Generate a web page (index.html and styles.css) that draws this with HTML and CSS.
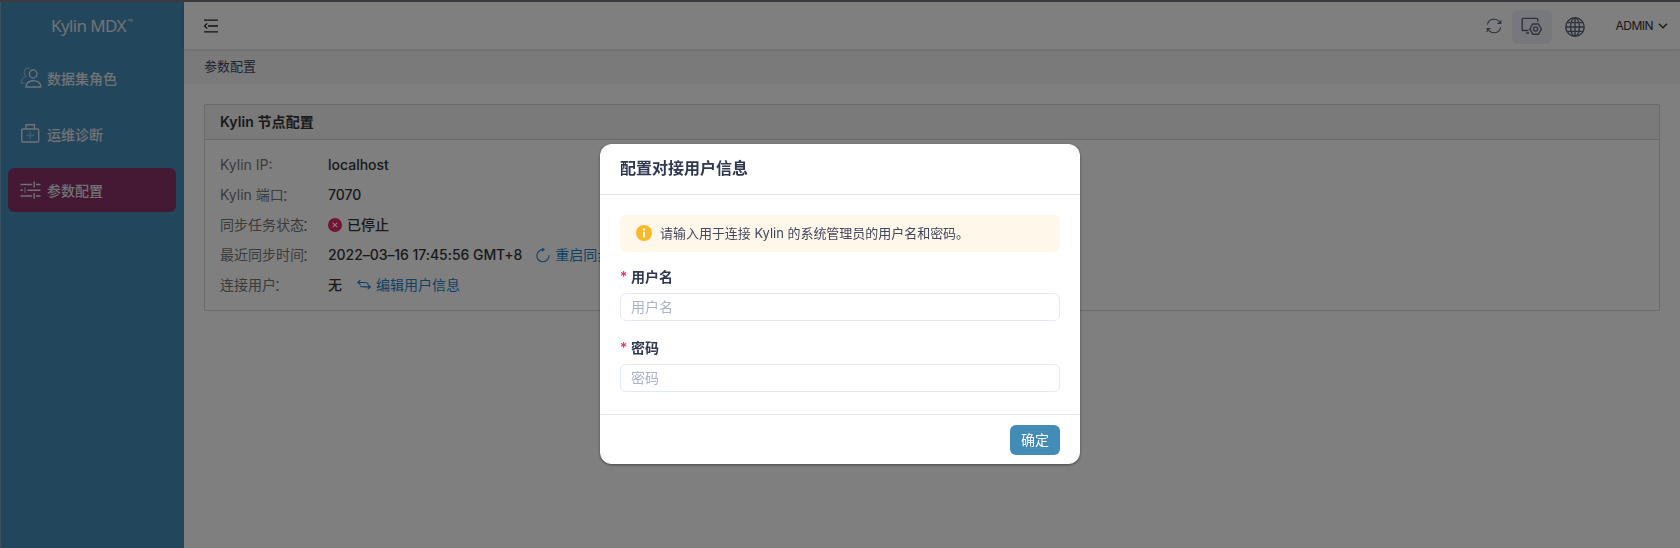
FILE: index.html
```html
<!DOCTYPE html>
<html lang="zh-CN">
<head>
<meta charset="utf-8">
<title>Kylin MDX</title>
<link rel="stylesheet" href="styles.css">
</head>
<body>
<div class="app">
  <aside class="sidebar">
    <div class="logo">Kylin MDX<span class="logo-tm">™</span></div>
    <nav class="menu">
      <a class="menu-item">
        <svg class="menu-icon" width="22" height="22" viewBox="0 0 22 22"><g class="dim"><path d="M10 1.3C7 .2 4.3 2 4.3 4.9c0 1.8.7 3 2 4"/><path d="M6.8 9.6C3.4 9.8 1.3 12.2 1 16h3.6"/></g><ellipse cx="13.2" cy="7" rx="3.8" ry="4.1"/><path d="M6 20c0-3.9 3-6.3 7.4-6.3s7.4 2.4 7.4 6.3z"/></svg>
        <span>数据集角色</span>
      </a>
      <a class="menu-item">
        <svg class="menu-icon" width="22" height="22" viewBox="0 0 22 22"><rect x="1.7" y="6" width="17" height="13" rx="1"/><path d="M6 6V1.8h8.4V6"/><path class="dim" d="M10.2 8.4v8.2M6.1 12.5h8.2"/></svg>
        <span>运维诊断</span>
      </a>
      <a class="menu-item active">
        <svg class="menu-icon" width="22" height="22" viewBox="0 0 22 22"><path d="M.5 5.5h11.7M14.2 2.6v5.8M16 5.5h4.5M.5 11.2h2.3M7.5 11.2h13M.5 17h11.7M14.2 14v5.8M16 17h4.5"/><path class="dim" d="M5 8.4v5.7"/></svg>
        <span>参数配置</span>
      </a>
    </nav>
  </aside>
  <div class="main">
    <header class="topbar">
      <svg class="fold" width="16" height="14" viewBox="0 0 16 14"><path d="M1 1.2h14M5 7h10M1 12.8h14M4.2 4.4L1.6 7l2.6 2.6"/></svg>
      <div class="actions">
        <svg class="refresh" width="16" height="16" viewBox="0 0 16 16"><path d="M1.4 6.6A6.7 6.7 0 0 1 14 5M14.6 9.4A6.7 6.7 0 0 1 2 11M14.8 2v3.4h-3.4M1.2 14v-3.4h3.4"/></svg>
        <span class="manage"><svg width="22" height="20" viewBox="0 0 22 20"><path d="M7.5 13.5H2.2a1 1 0 0 1-1-1V2.4a1 1 0 0 1 1-1h13.6a1 1 0 0 1 1 1v2.4M5 16h3"/><path d="M11.8 7h5.6l3 5-3 5.2h-5.6L8.8 12z"/><circle cx="14.6" cy="12" r="2.1"/></svg></span>
        <svg class="globe" width="20" height="20" viewBox="0 0 20 20"><circle cx="10" cy="10" r="9.2"/><ellipse cx="10" cy="10" rx="4.4" ry="9.2"/><path d="M10 1v18M1 10h18M2.2 5.6h15.6M2.2 14.4h15.6"/></svg>
        <span class="user">ADMIN<svg width="10" height="6" viewBox="0 0 10 6"><path d="M1 .8l4 4 4-4"/></svg></span>
      </div>
    </header>
    <div class="breadcrumb">参数配置</div>
    <section class="card">
      <h2 class="card-title">Kylin 节点配置</h2>
      <dl class="info">
        <dt>Kylin IP:</dt><dd>localhost</dd>
        <dt>Kylin 端口<span class="colon">：</span></dt><dd>7070</dd>
        <dt>同步任务状态<span class="colon">：</span></dt><dd><svg class="stopped" width="14" height="14" viewBox="0 0 14 14"><circle cx="7" cy="7" r="7"/><path d="M4.8 4.8l4.4 4.4M9.2 4.8L4.8 9.2"/></svg>已停止</dd>
        <dt>最近同步时间<span class="colon">：</span></dt><dd><span class="time">2022–03–16 17:45:56 GMT+8</span><a class="link"><svg width="14" height="14" viewBox="0 0 14 14"><path d="M13 7.2A6.1 6.1 0 1 1 6.8 1.6"/><path class="tip" d="M6.2-.6L9 1.5 6.2 3.8z"/></svg>重启同步任务</a></dd>
        <dt>连接用户<span class="colon">：</span></dt><dd><span>无</span><a class="link"><svg width="14" height="14" viewBox="0 0 14 14"><path d="M3.4 2L.8 4.5l2.6 2.1M.8 4.5h7.6q2.2 0 2.8 1.6M10.8 6.6l2.5 2.3-2.5 2.3M13.3 8.9H6Q3.6 8.9 3.2 7.6"/></svg>编辑用户信息</a></dd>
      </dl>
    </section>
  </div>
</div>
<div class="overlay">
  <div class="dialog">
    <div class="dialog-header">配置对接用户信息</div>
    <div class="dialog-body">
      <div class="alert"><svg width="16" height="16" viewBox="0 0 16 16"><circle cx="8" cy="8" r="8"/><path d="M7 3.5h2v2H7zM7 6.8h2v5.4H7z"/></svg>请输入用于连接 Kylin 的系统管理员的用户名和密码。</div>
      <label class="label"><span class="required">*</span>用户名</label>
      <input class="input" type="text" placeholder="用户名">
      <label class="label"><span class="required">*</span>密码</label>
      <input class="input" type="password" placeholder="密码">
    </div>
    <div class="dialog-footer"><button class="confirm">确定</button></div>
  </div>
</div>
</body>
</html>
```
FILE: styles.css
```css
* { box-sizing: border-box; }
body {
  margin: 0;
  height: 548px;
  overflow: hidden;
  font: 14px/20px Inter, "Noto Sans CJK SC", sans-serif;
  color: #333;
  background: #fff;
}
svg { flex: none; fill: none; stroke: currentColor; stroke-width: 1.4; overflow: visible; }
.app {
  display: flex;
  height: 548px;
  border-top: 2px solid #77777f;
}
.sidebar {
  width: 184px;
  background: #448cb8;
  border-left: 1px solid #6fa5c6;
  color: #e0e6ea;
}
.logo {
  height: 49px;
  padding: 13px 0 0 50px;
  font: 17px/22px "Noto Sans", sans-serif;
  letter-spacing: -.62px;
  white-space: nowrap;
}
.logo-tm { font-size: 7px; vertical-align: 8px; line-height: 1; margin-left: 2px; }
.menu {
  display: flex;
  flex-direction: column;
  gap: 12px;
  padding: 5px 8px 0 7px;
}
.menu-item {
  display: flex;
  align-items: center;
  gap: 5px;
  height: 44px;
  padding-left: 12px;
  border-radius: 6px;
  font-weight: 500;
}
.menu-item span { padding-top: 1px; }
.menu-item.active { background: #8a3067; }
.menu-icon .dim { stroke: #8ab5d6; }
.main { flex: 1; min-width: 0; }
.topbar {
  display: flex;
  align-items: center;
  justify-content: space-between;
  height: 47px;
  padding: 0 12px 0 19px;
  background: #fff;
  box-shadow: 0 1px 4px rgba(0,0,0,.12);
  position: relative;
}
.fold { stroke-width: 1.3; color: #222; }
.actions { display: flex; align-items: center; color: #5b657b; }
.refresh { stroke-width: 1.1; margin-right: 10px; }
.manage {
  display: flex;
  align-items: center;
  justify-content: center;
  width: 40px;
  height: 34px;
  margin: 2px 13px 0 0;
  border-radius: 6px;
  background: #eff0f8;
}
.globe { margin: 3px 30px 0 0; }
.user { display: flex; align-items: center; gap: 5px; font-size: 12px; letter-spacing: -.5px; color: #333; padding-top: 1px; }
.breadcrumb {
  height: 35px;
  padding: 7px 20px;
  font-size: 13px;
  line-height: 20px;
  color: #44485c;
  background: #f5f5f5;
}
.card {
  height: 207px;
  margin: 20px;
  border: 1px solid #d4d4d4;
  border-radius: 2px;
}
.card-title {
  height: 35px;
  margin: 0;
  padding: 7px 15px;
  font-size: 14px;
  font-weight: 600;
  line-height: 20px;
  letter-spacing: .08px;
  background: #f5f5f5;
  border-bottom: 1px solid #d4d4d4;
}
.info {
  display: grid;
  grid-template-columns: 108px 1fr;
  grid-auto-rows: 30px;
  margin: 0;
  padding: 10px 15px;
  line-height: 30px;
}
.info dt { color: #777; white-space: nowrap; }
.colon { margin-left: -2px; }
.info dd { display: flex; align-items: center; margin: 0; font-weight: 500; white-space: nowrap; }
.time { letter-spacing: -.05px; }
.stopped { margin-right: 5px; fill: #e8286b; stroke: none; }
.stopped path { stroke: #fff; stroke-width: 1.2; }
.link { display: flex; align-items: center; gap: 5px; margin-left: 15px; color: #1c83c9; font-weight: 400; }
.link svg { stroke-width: 1.1; }
.time + .link { margin-left: 14px; }
.tip { fill: currentColor; stroke: none; }
.overlay {
  position: fixed;
  inset: 0;
  display: flex;
  align-items: flex-start;
  justify-content: center;
  padding-top: 144px;
  background: rgba(0,0,0,.5);
}
.dialog {
  width: 480px;
  height: 320px;
  border-radius: 12px;
  background: #fff;
  box-shadow: 0 1px 3px rgba(0,0,0,.45);
  color: #2f3752;
}
.dialog-header {
  height: 51px;
  padding: 14px 20px;
  font-size: 16px;
  font-weight: 600;
  line-height: 20px;
  border-bottom: 1px solid #e3e9f3;
}
.dialog-body { display: flex; flex-direction: column; height: 219px; padding: 20px 20px 0; }
.alert {
  display: flex;
  align-items: center;
  gap: 8px;
  height: 37px;
  margin-bottom: 14px;
  padding: 0 0 2px 16px;
  border-radius: 6px;
  background: #fff7e9;
  font-size: 13px;
  letter-spacing: -.03px;
  color: #41475c;
}
.alert svg { fill: #fbb929; stroke: none; }
.alert path { fill: #fff; }
.label { height: 28px; line-height: 21px; font-weight: 600; }
.required { display: inline-block; width: 11px; color: #e8286b; font-weight: 500; }
.input {
  width: 440px;
  height: 28px;
  margin: 0 0 15px;
  padding: 0 10px 2px;
  border: 1px solid #e3e9f3;
  border-radius: 6px;
  font: inherit;
}
.label + .input { position: relative; top: -1px; }
.input::placeholder { color: #a9b4ca; opacity: 1; }
.dialog-footer {
  display: flex;
  justify-content: flex-end;
  height: 50px;
  padding: 10px 20px;
  border-top: 1px solid #e3e9f3;
}
.confirm {
  width: 50px;
  height: 30px;
  padding: 0 0 1px;
  border: 0;
  border-radius: 6px;
  background: #448cb8;
  color: #fff;
  font: inherit;
}
```
